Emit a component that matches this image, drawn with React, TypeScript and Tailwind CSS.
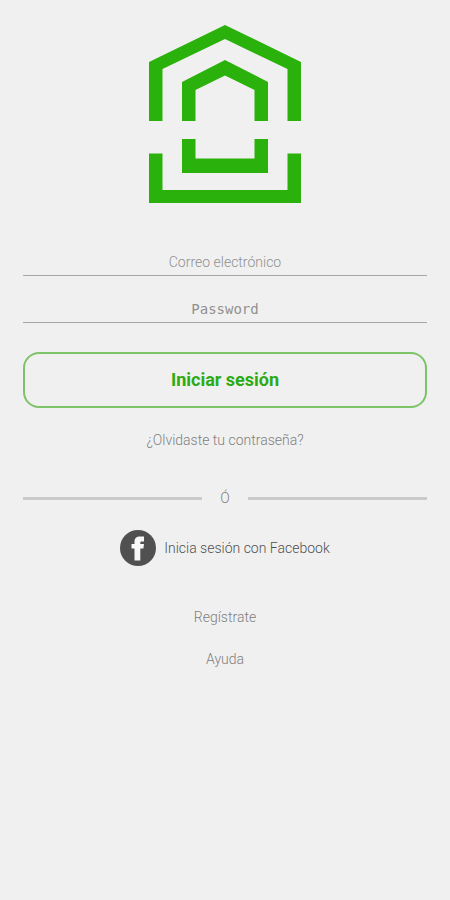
const inputClasses =
  "block h-7 w-full border-b border-[#a6a6a6] bg-transparent text-center text-sm text-[#777777] outline-none placeholder:text-[#909090] placeholder:opacity-100";

const Logo = () => (
  <svg
    viewBox="0 0 152 178"
    className="h-[178px] w-[152px]"
    fill="#2bb10b"
    role="img"
    aria-label="Logo"
  >
    <path d="M0 96V37L76 0L152 37V96H138.500V44L76 14L13.500 44V96Z" />
    <path d="M33 96V57L76 35L119 57V96H105.500V65L76 50.500L46.500 65V96Z" />
    <path d="M33 114H46.500V133.500H105.500V114H119V148H33Z" />
    <path d="M0 128.500H13.500V165H138.500V128.500H152V178H0Z" />
  </svg>
);

const FacebookIcon = () => (
  <svg viewBox="0 0 36 36" className="size-9" aria-hidden="true">
    <circle cx="18" cy="18" r="18" fill="#505050" />
    <path
      d="M14.500 30.500V18.500H11.500V14H14.500V12C14.500 8.300 16.500 6.600 20 6.600H24V11.500H22C20.800 11.500 20.300 12 20.300 12.900V14H24L23.400 18.500H20.300V30.500Z"
      fill="#f8f8f8"
    />
  </svg>
);

const Divider = () => (
  <div className="mt-[38px] flex items-center">
    <div className="h-[3px] flex-1 bg-[#cacaca]" />
    <span className="w-[46px] text-center">Ó</span>
    <div className="h-[3px] flex-1 bg-[#cacaca]" />
  </div>
);

const App = () => {
  return (
    <main className="min-h-screen bg-[#f0f0f0] px-[23px] pt-[25px] pb-8 font-['Roboto',sans-serif] text-sm font-light text-[#808080]">
      <div className="flex justify-center">
        <Logo />
      </div>

      <form className="mt-[45px]" onSubmit={(e) => e.preventDefault()}>
        <input
          type="email"
          aria-label="Correo electrónico"
          placeholder="Correo electrónico"
          className={inputClasses}
        />
        <input
          type="password"
          aria-label="Password"
          placeholder="Password"
          className={`${inputClasses} mt-[19px] font-['DejaVu_Sans_Mono',monospace]`}
        />
        <button
          type="submit"
          className="mt-[29px] h-14 w-full rounded-2xl border-2 border-[#7dc469] text-lg font-bold text-[#2cab12]"
        >
          Iniciar sesión
        </button>
      </form>

      <div className="mt-[22px] text-center">
        <a href="#recuperar">¿Olvidaste tu contraseña?</a>
      </div>

      <Divider />

      <div className="mt-[22px] flex justify-center">
        <button type="button" className="flex items-center gap-2 text-[#505050]">
          <FacebookIcon />
          Inicia sesión con Facebook
        </button>
      </div>

      <nav className="mt-[41px] flex flex-col items-center gap-[22px]">
        <a href="#registro">Regístrate</a>
        <a href="#ayuda">Ayuda</a>
      </nav>
    </main>
  );
};

export default App;
